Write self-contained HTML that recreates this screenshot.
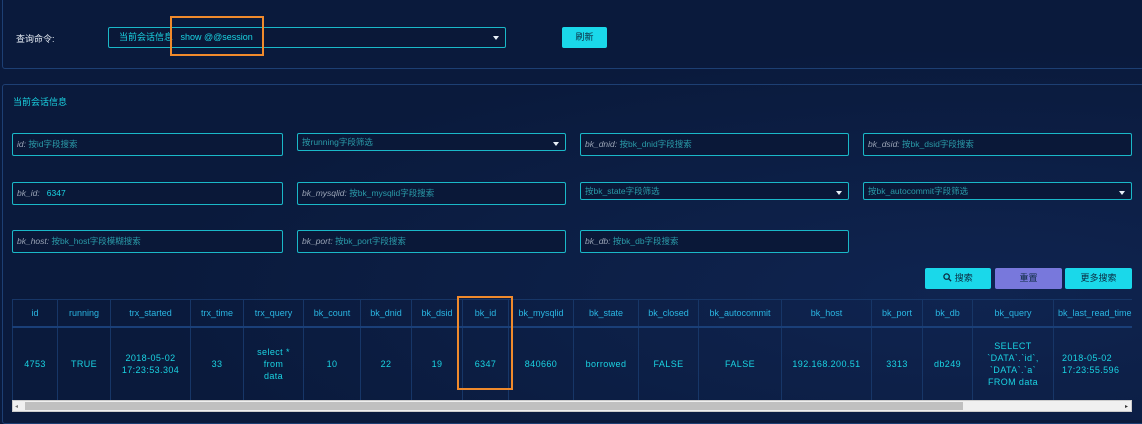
<!DOCTYPE html>
<html><head><meta charset="utf-8"><style>
*{box-sizing:border-box;margin:0;padding:0}
body{width:1142px;height:420px;overflow:hidden;background:#0a1a3c;font-family:"Liberation Sans","Noto Sans CJK SC",sans-serif;position:relative;color:#1ad3e2}
.bgg{position:absolute;inset:0;background:radial-gradient(ellipse at 85% 70%,#0f2450 0%,#0a1a3c 60%),#0a1a3c}
.panel{position:absolute;border:1px solid #1d3f73;border-radius:3px}
.abs{position:absolute}
.inp{position:absolute;height:23px;border:1px solid #1ab8c8;border-radius:2px;background:#0a1838;font-size:8.5px;line-height:21px;padding-left:4px;color:#2a9aa8;white-space:nowrap}
.inp i{color:#9aa4b6}
.sel::after{content:"";position:absolute;right:6px;top:8px;border-left:3px solid transparent;border-right:3px solid transparent;border-top:4px solid #e8f0f8}
.btn{position:absolute;top:268px;height:21px;border-radius:2px;font-size:9px;line-height:21px;text-align:center;color:#0b2a40}
.tw{position:absolute;left:12px;top:299px;width:1120px;overflow:hidden}
table{border-collapse:collapse;font-size:9px;table-layout:fixed}
td,th{border:1px solid #173667;text-align:center;font-weight:normal;color:#1ad3e2;overflow:hidden;white-space:nowrap}
th{height:27px;color:#2ab6e2;border-bottom:2px solid #1a3f78}
td{height:74px;line-height:12px;letter-spacing:.4px}
</style></head><body>
<div class="bgg"></div>
<div class="panel" style="left:2px;top:-4px;width:1142px;height:73px"></div>
<div class="abs" style="left:16px;top:32px;font-size:9px;color:#e6ecf4">查询命令:</div>
<div class="inp sel" style="left:108px;top:27px;width:398px;height:21px;line-height:19px;padding-left:10px;color:#1ad3e2;font-size:9px">当前会话信息&nbsp;&nbsp;&nbsp;show @@session</div>
<div class="abs" style="left:170px;top:16px;width:94px;height:40px;border:2px solid #f08a2c"></div>
<div class="btn" style="left:562px;top:27px;width:45px;background:#1ad8ea">刷新</div>
<div class="panel" style="left:2px;top:84px;width:1142px;height:340px"></div>
<div class="abs" style="left:13px;top:95px;font-size:9px;color:#1ad3e2">当前会话信息</div>

<div class="inp" style="left:12px;top:133px;width:271px"><i>id:</i> 按id字段搜索</div>
<div class="inp sel" style="left:297px;top:133px;width:269px;height:18px;line-height:16px">按running字段筛选</div>
<div class="inp" style="left:580px;top:133px;width:269px"><i>bk_dnid:</i> 按bk_dnid字段搜索</div>
<div class="inp" style="left:863px;top:133px;width:269px"><i>bk_dsid:</i> 按bk_dsid字段搜索</div>

<div class="inp" style="left:12px;top:182px;width:271px"><i>bk_id:</i> &nbsp;&nbsp;<span style="color:#1ad3e2">6347</span></div>
<div class="inp" style="left:297px;top:182px;width:269px"><i>bk_mysqlid:</i> 按bk_mysqlid字段搜索</div>
<div class="inp sel" style="left:580px;top:182px;width:269px;height:18px;line-height:16px">按bk_state字段筛选</div>
<div class="inp sel" style="left:863px;top:182px;width:269px;height:18px;line-height:16px">按bk_autocommit字段筛选</div>

<div class="inp" style="left:12px;top:230px;width:271px"><i>bk_host:</i> 按bk_host字段模糊搜索</div>
<div class="inp" style="left:297px;top:230px;width:269px"><i>bk_port:</i> 按bk_port字段搜索</div>
<div class="inp" style="left:580px;top:230px;width:269px"><i>bk_db:</i> 按bk_db字段搜索</div>

<div class="btn" style="left:925px;width:66px;background:#1ad8ea"><svg width="9" height="9" viewBox="0 0 10 10" style="vertical-align:-1px"><circle cx="4" cy="4" r="3" fill="none" stroke="#0b2a40" stroke-width="1.4"/><path d="M6.3 6.3L9 9" stroke="#0b2a40" stroke-width="1.5"/></svg> 搜索</div>
<div class="btn" style="left:995px;width:67px;background:#7878dc">重置</div>
<div class="btn" style="left:1065px;width:67px;background:#1ad8ea">更多搜索</div>

<div class="tw">
<table style="width:1140px">
<colgroup><col style="width:45px"><col style="width:53px"><col style="width:80px"><col style="width:53px"><col style="width:60px"><col style="width:57px"><col style="width:51px"><col style="width:51px"><col style="width:46px"><col style="width:65px"><col style="width:65px"><col style="width:60px"><col style="width:83px"><col style="width:90px"><col style="width:51px"><col style="width:50px"><col style="width:81px"><col style="width:99px"></colgroup>
<tr><th>id</th><th>running</th><th>trx_started</th><th>trx_time</th><th>trx_query</th><th>bk_count</th><th>bk_dnid</th><th>bk_dsid</th><th>bk_id</th><th>bk_mysqlid</th><th>bk_state</th><th>bk_closed</th><th>bk_autocommit</th><th>bk_host</th><th>bk_port</th><th>bk_db</th><th>bk_query</th><th style="text-align:left;padding-left:4px">bk_last_read_time</th></tr>
<tr><td>4753</td><td>TRUE</td><td>2018-05-02<br>17:23:53.304</td><td>33</td><td>select *<br>from<br>data</td><td>10</td><td>22</td><td>19</td><td>6347</td><td>840660</td><td>borrowed</td><td>FALSE</td><td>FALSE</td><td>192.168.200.51</td><td>3313</td><td>db249</td><td>SELECT<br>`DATA`.`id`,<br>`DATA`.`a`<br>FROM data</td><td style="text-align:left;padding-left:8px">2018-05-02<br>17:23:55.596</td></tr>
</table>
</div>
<div class="abs" style="left:457px;top:296px;width:56px;height:94px;border:2px solid #f08a2c"></div>
<div class="abs" style="left:12px;top:400px;width:1120px;height:12px;background:#f0f0f0;border:1px solid #ccc"></div>
<div class="abs" style="left:25px;top:402px;width:938px;height:8px;background:#c0c0c0"></div>
<div class="abs" style="left:15px;top:403px;font-size:6px;color:#777">◂</div>
<div class="abs" style="left:1125px;top:403px;font-size:6px;color:#333">▸</div>
</body></html>
